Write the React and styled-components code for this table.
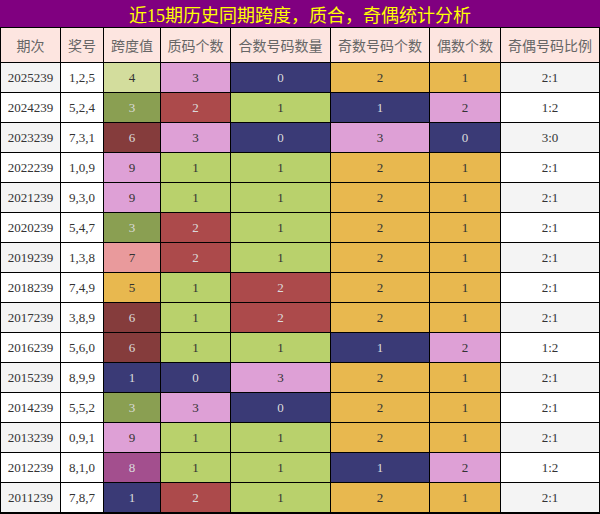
import React from "react";
import styled, { createGlobalStyle } from "styled-components";

const Global = createGlobalStyle`
  html, body { margin: 0; padding: 0; background: #fff; }
  body { font-family: "Liberation Serif", "Noto Sans CJK SC", serif; }
`;

const C = {
  lgreen: "#d3dd9d",
  olive: "#8a9f52",
  plum: "#dea0d6",
  red: "#ac4a4b",
  navy: "#3a3a76",
  lime: "#b9d16c",
  gold: "#e8b84f",
  maroon: "#853c3c",
  salmon: "#e99a9c",
  purple: "#a34f8e",
};
const dark = new Set([C.olive, C.red, C.navy, C.maroon, C.purple]);

const Board = styled.div`
  width: 600px;
  height: 514px;
  background: #000;
  display: flex;
  flex-direction: column;
  gap: 1px;
  box-sizing: border-box;
  padding: 0 1px 1px 1px;
`;

const Title = styled.div`
  height: 27px;
  margin: 0 -1px;
  background: #800080;
  color: #ffff00;
  font-family: "Liberation Serif", "Noto Sans CJK SC", serif;
  font-size: 18px;
  display: flex;
  align-items: center;
  justify-content: center;
  letter-spacing: 0;
`;

const Grid = styled.div`
  display: grid;
  grid-template-columns: 59px 42px 56px 69px 99px 98px 70px 98px;
  grid-template-rows: 34px repeat(15, 29px);
  gap: 1px;
`;

const Head = styled.div`
  background: #fde5e0;
  color: #666;
  font-family: "Noto Sans CJK SC", sans-serif;
  font-size: 14px;
  display: flex;
  align-items: center;
  justify-content: center;
  white-space: nowrap;
`;

const Cell = styled.div`
  background: ${(p) => p.$bg};
  color: ${(p) => (p.$light ? "#dcdcdc" : "#333")};
  font-family: "Liberation Serif", serif;
  font-size: 13px;
  display: flex;
  align-items: center;
  justify-content: center;
`;

const heads = ["期次", "奖号", "跨度值", "质码个数", "合数号码数量", "奇数号码个数", "偶数个数", "奇偶号码比例"];

const rows = [
  ["2025239", "1,2,5", [4, C.lgreen], [3, C.plum], [0, C.navy], [2, C.gold], [1, C.gold], "2:1"],
  ["2024239", "5,2,4", [3, C.olive], [2, C.red], [1, C.lime], [1, C.navy], [2, C.plum], "1:2"],
  ["2023239", "7,3,1", [6, C.maroon], [3, C.plum], [0, C.navy], [3, C.plum], [0, C.navy], "3:0"],
  ["2022239", "1,0,9", [9, C.plum], [1, C.lime], [1, C.lime], [2, C.gold], [1, C.gold], "2:1"],
  ["2021239", "9,3,0", [9, C.plum], [1, C.lime], [1, C.lime], [2, C.gold], [1, C.gold], "2:1"],
  ["2020239", "5,4,7", [3, C.olive], [2, C.red], [1, C.lime], [2, C.gold], [1, C.gold], "2:1"],
  ["2019239", "1,3,8", [7, C.salmon], [2, C.red], [1, C.lime], [2, C.gold], [1, C.gold], "2:1"],
  ["2018239", "7,4,9", [5, C.gold], [1, C.lime], [2, C.red], [2, C.gold], [1, C.gold], "2:1"],
  ["2017239", "3,8,9", [6, C.maroon], [1, C.lime], [2, C.red], [2, C.gold], [1, C.gold], "2:1"],
  ["2016239", "5,6,0", [6, C.maroon], [1, C.lime], [1, C.lime], [1, C.navy], [2, C.plum], "1:2"],
  ["2015239", "8,9,9", [1, C.navy], [0, C.navy], [3, C.plum], [2, C.gold], [1, C.gold], "2:1"],
  ["2014239", "5,5,2", [3, C.olive], [3, C.plum], [0, C.navy], [2, C.gold], [1, C.gold], "2:1"],
  ["2013239", "0,9,1", [9, C.plum], [1, C.lime], [1, C.lime], [2, C.gold], [1, C.gold], "2:1"],
  ["2012239", "8,1,0", [8, C.purple], [1, C.lime], [1, C.lime], [1, C.navy], [2, C.plum], "1:2"],
  ["2011239", "7,8,7", [1, C.navy], [2, C.red], [1, C.lime], [2, C.gold], [1, C.gold], "2:1"],
];

export default function App() {
  return (
    <>
      <Global />
      <Board>
        <Title>近15期历史同期跨度，质合，奇偶统计分析</Title>
        <Grid>
          {heads.map((h) => (
            <Head key={h}>{h}</Head>
          ))}
          {rows.map((r, i) => {
            const base = i % 2 === 0 ? "#f4f4f4" : "#ffffff";
            return (
              <React.Fragment key={r[0]}>
                <Cell $bg={base}>{r[0]}</Cell>
                <Cell $bg="#ffffff">{r[1]}</Cell>
                {r.slice(2, 7).map(([v, bg], j) => (
                  <Cell key={j} $bg={bg} $light={dark.has(bg)}>
                    {v}
                  </Cell>
                ))}
                <Cell $bg={base}>{r[7]}</Cell>
              </React.Fragment>
            );
          })}
        </Grid>
      </Board>
    </>
  );
}
